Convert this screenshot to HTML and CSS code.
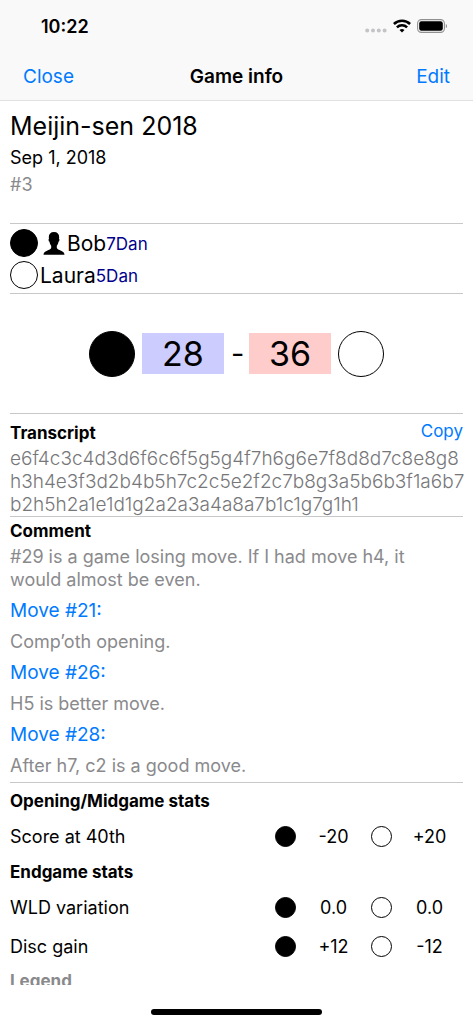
FILE: index.html
```html
<!DOCTYPE html>
<html lang="en">
<head>
<meta charset="utf-8">
<meta name="viewport" content="width=device-width, initial-scale=1">
<title>Game info</title>
<link rel="stylesheet" href="styles.css">
</head>
<body>
<div class="screen">
  <header class="top">
    <div class="status">
      <time class="clock">10:22</time>
      <div class="indicators">
        <svg class="cell" viewBox="0 0 22 5" aria-hidden="true"><g fill="#c4c4c6"><circle cx="2.2" cy="2.5" r="2"/><circle cx="8" cy="2.5" r="2"/><circle cx="13.8" cy="2.5" r="2"/><circle cx="19.6" cy="2.5" r="2"/></g></svg>
        <svg class="wifi" viewBox="0 0 18 14" aria-hidden="true"><g fill="none" stroke="#000" stroke-width="2.5"><path d="M.9 5a11.5 11.5 0 0 1 16.2 0"/><path d="M3.900 8.300a7.200 7.200 0 0 1 10.200 0"/></g><path d="M9 13.600 6.500 11.100a3.600 3.600 0 0 1 5 0z"/></svg>
        <svg class="battery" viewBox="0 0 31 14" aria-hidden="true"><rect x=".6" y=".6" width="26.8" height="12.8" rx="3.8" fill="none" stroke="#919193" stroke-width="1.1"/><rect x="2.2" y="2.2" width="23.6" height="9.6" rx="2.2"/><path d="M28.8 4.900c1.700.6 1.700 3.600 0 4.200z" fill="#919193"/></svg>
      </div>
    </div>
    <nav class="navbar">
      <button class="link" type="button">Close</button>
      <h1 class="nav-title">Game info</h1>
      <button class="link nav-end" type="button">Edit</button>
    </nav>
  </header>

  <main class="content">
    <section class="summary">
      <h2 class="event">Meijin-sen 2018</h2>
      <p class="date">Sep 1, 2018</p>
      <p class="round">#3</p>
    </section>

    <section class="players">
      <div class="player">
        <span class="disc medium black"></span>
        <svg class="person" viewBox="0 0 22 23" aria-hidden="true"><path d="M11 0c3.4 0 5.2 2 5.2 5.2 0 .6-.1 1.100-.2 1.600.8.2.5 2.700-.5 3-.3 1.800-.9 3-1.700 3.900v2.100c.3 1.700 2.200 2.100 4.200 2.900 2.200.8 3.300 1.700 3.500 4.100H.5c.2-2.400 1.300-3.300 3.500-4.100 2-.8 3.900-1.200 4.200-2.900v-2.100C7.400 12.800 6.800 11.600 6.500 9.800c-1-.3-1.300-2.800-.5-3-.1-.5-.2-1-.2-1.600C5.800 2 7.600 0 11 0z"/></svg>
        <span class="name">Bob</span><span class="rank">7Dan</span>
      </div>
      <div class="player">
        <span class="disc medium"></span>
        <span class="name">Laura</span><span class="rank">5Dan</span>
      </div>
    </section>

    <section class="result">
      <span class="disc large black"></span>
      <span class="score score-black">28</span>
      <span class="dash">-</span>
      <span class="score score-white">36</span>
      <span class="disc large"></span>
    </section>

    <section class="transcript">
      <div class="transcript-head">
        <h3 class="heading">Transcript</h3>
        <button class="link copy" type="button">Copy</button>
      </div>
      <p class="body-text moves">e6f4c3c4d3d6f6c6f5g5g4f7h6g6e7f8d8d7c8e8g8<br>h3h4e3f3d2b4b5h7c2c5e2f2c7b8g3a5b6b3f1a6b7<br>b2h5h2a1e1d1g2a2a3a4a8a7b1c1g7g1h1</p>
    </section>

    <section class="comments">
      <h3 class="heading">Comment</h3>
      <p class="body-text">#29 is a game losing move. If I had move h4, it would almost be even.</p>
      <a class="move" href="#move-21">Move #21:</a>
      <p class="note">Comp’oth opening.</p>
      <a class="move" href="#move-26">Move #26:</a>
      <p class="note">H5 is better move.</p>
      <a class="move" href="#move-28">Move #28:</a>
      <p class="note">After h7, c2 is a good move.</p>
    </section>

    <section class="stats">
      <h3 class="heading stats-heading">Opening/Midgame stats</h3>
      <div class="stat"><span>Score at 40th</span><span class="disc small black"></span><span class="value">-20</span><span class="disc small"></span><span class="value">+20</span></div>
      <h3 class="heading stats-heading">Endgame stats</h3>
      <div class="stat"><span>WLD variation</span><span class="disc small black"></span><span class="value">0.0</span><span class="disc small"></span><span class="value">0.0</span></div>
      <div class="stat"><span>Disc gain</span><span class="disc small black"></span><span class="value">+12</span><span class="disc small"></span><span class="value">-12</span></div>
      <h3 class="heading legend">Legend</h3>
    </section>
  </main>

  <footer class="home"><div class="home-bar"></div></footer>
</div>
</body>
</html>
```
FILE: styles.css
```css
* { box-sizing: border-box; }

body {
  margin: 0;
  background: #fff;
  color: #000;
  font-family: Inter, "Liberation Sans", sans-serif;
  font-size: 18px;
}

h1, h2, h3, p { margin: 0; font-weight: 400; }

button {
  padding: 0;
  border: 0;
  background: none;
  font-family: inherit;
  font-size: inherit;
}

.link { color: #007aff; text-align: left; }

.screen {
  display: flex;
  flex-direction: column;
  height: 100vh;
}

.top {
  background: #f9f9f9;
  border-bottom: 1px solid #e0e0e0;
}

.status {
  display: flex;
  justify-content: space-between;
  align-items: center;
  height: 52px;
  padding: 0 25px 0 41px;
}

.clock { font-size: 18px; font-weight: 600; }

.indicators { display: flex; align-items: center; gap: 6px; }
.cell { width: 22px; height: 5px; margin-top: 8px; }
.wifi { width: 18px; height: 14px; }
.battery { width: 31px; height: 14px; }

.navbar {
  display: grid;
  grid-template-columns: 1fr auto 1fr;
  align-items: center;
  height: 48px;
  padding: 0 23px;
  font-size: 19px;
}

.nav-title { font-size: 19px; font-weight: 600; }
.nav-end { justify-self: end; }

.content {
  flex: 1;
  min-height: 0;
  overflow: hidden;
  padding: 7px 10px 0;
}

.content > section + section { border-top: 1px solid #c8c8c8; }

.summary { height: 115px; }
.event { font-size: 25px; line-height: 36px; }
.date { font-size: 18px; line-height: 27px; }
.round { font-size: 18px; line-height: 28px; color: #8a8a8d; }

.players { padding: 3px 0 2px; }
.player { display: flex; align-items: center; height: 32px; }
.name { font-size: 21px; margin-left: 2px; }
.rank { font-size: 17px; color: #00008b; padding-top: 2px; }
.person { width: 22px; height: 23px; margin-left: 5px; }

.disc {
  flex: none;
  border: 1px solid #000;
  border-radius: 50%;
}
.black { background: #000; }
.small { width: 21px; height: 21px; }
.medium { width: 28px; height: 28px; }
.large { width: 46px; height: 46px; }

.result {
  display: flex;
  justify-content: center;
  align-items: center;
  gap: 7px;
  height: 120px;
}
.score {
  width: 82px;
  line-height: 41px;
  font-size: 34px;
  text-align: center;
}
.score-black { background: #ccf; }
.score-white { background: #fcc; }
.dash { width: 11px; font-size: 29px; text-align: center; }

.heading { font-size: 17px; font-weight: 700; line-height: 27px; }

.transcript-head {
  display: flex;
  justify-content: space-between;
  align-items: center;
  height: 33px;
  padding-top: 6px;
}
.copy { font-size: 17px; line-height: 27px; padding-bottom: 4px; }

.body-text, .note { font-size: 18px; line-height: 23px; color: #8a8a8d; }
.moves { font-size: 19px; font-weight: 300; color: #77777a; }

.move {
  display: block;
  font-size: 19px;
  line-height: 31px;
  margin-top: 4px;
  color: #007aff;
  text-decoration: none;
}
.note { padding: 4px 0 0; }
.comments { padding: 1px 20px 5px 0; }

.stats-heading { padding: 5px 0 4px; line-height: 27px; }
.stat {
  display: grid;
  grid-template-columns: 1fr 21px 75px 21px 75px;
  align-items: center;
  height: 35px;
  margin-right: -4px;
}
.stat + .stat { margin-top: 4px; }
.value { text-align: center; }
.legend { margin-top: 4px; color: #8a8a8d; }

.home { flex: none; height: 39px; padding-top: 24px; }
.home-bar {
  width: 36%;
  height: 6px;
  margin: 0 auto;
  border-radius: 3px;
  background: #000;
}
```
